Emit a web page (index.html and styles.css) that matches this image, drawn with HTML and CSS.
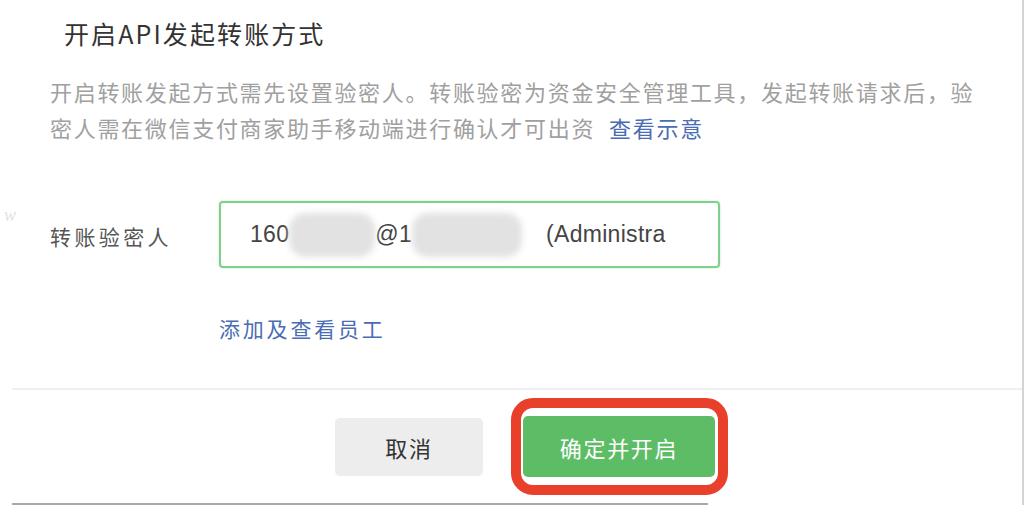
FILE: index.html
```html
<!DOCTYPE html>
<html lang="zh-CN">
<head>
<meta charset="utf-8">
<link rel="stylesheet" href="styles.css">
</head>
<body>
<div class="dialog">
  <div class="body">
    <h1 class="title">开启API发起转账方式</h1>
    <div class="desc">
      <div class="desc-line">开启转账发起方式需先设置验密人。转账验密为资金安全管理工具，发起转账请求后，验</div>
      <div class="desc-line"><span>密人需在微信支付商家助手移动端进行确认才可出资</span><a class="link desc-link">查看示意</a></div>
    </div>
    <div class="form-row">
      <span class="mark">w</span>
      <label class="label">转账验密人</label>
      <div class="input">160<span class="blob blob-a"></span>@1<span class="blob blob-b"></span>(Administra</div>
    </div>
    <div class="link-row"><a class="link">添加及查看员工</a></div>
  </div>
  <div class="divider"></div>
  <div class="footer">
    <button class="btn btn-cancel">取消</button>
    <div class="highlight">
      <button class="btn btn-ok">确定并开启</button>
    </div>
  </div>
  <div class="edge"></div>
</div>
</body>
</html>
```
FILE: styles.css
```css
html, body {
  margin: 0;
  padding: 0;
  background: #ffffff;
}
body {
  font-family: "Noto Sans CJK SC", "Liberation Sans", sans-serif;
  width: 1024px;
  height: 505px;
  overflow: hidden;
}
.dialog {
  margin-left: 12px;
  width: 1010px;
  height: 505px;
  border-right: 2px solid #d4d4d4;
  display: flex;
  flex-direction: column;
}
.body {
  padding-left: 38px;
}
.title {
  margin: 15px 0 0 14px;
  font-size: 25px;
  font-weight: normal;
  line-height: 36px;
  letter-spacing: 2.1px;
  color: #333333;
}
.desc {
  margin: 22px 0 0 0;
  width: 940px;
  font-size: 22px;
  line-height: 36px;
  letter-spacing: 1.7px;
  color: #a0a0a0;
}
.desc-line {
  white-space: nowrap;
}
.link {
  color: #4a6db3;
  cursor: pointer;
}
.desc-link {
  margin-left: 14px;
}
.form-row {
  margin-top: 56px;
  display: flex;
  align-items: center;
  position: relative;
}
.mark {
  position: absolute;
  left: -46px;
  top: 4px;
  font-family: "Liberation Serif", serif;
  font-style: italic;
  font-size: 18px;
  color: #e2e2e2;
}
.label {
  width: 169px;
  font-size: 21px;
  letter-spacing: 3.4px;
  color: #555555;
  padding-top: 3px;
}
.input {
  box-sizing: border-box;
  width: 501px;
  height: 67px;
  border: 2px solid #7fd089;
  border-radius: 4px;
  box-shadow: 0 0 2px rgba(100, 200, 110, 0.5);
  padding-left: 29px;
  display: flex;
  align-items: center;
  font-family: "Liberation Sans", "Noto Sans CJK SC", sans-serif;
  font-size: 23px;
  letter-spacing: 0.3px;
  color: #444444;
}
.blob {
  display: inline-block;
  height: 44px;
  background: #e2e2e2;
  border-radius: 16px;
  filter: blur(3px);
}
.blob-a {
  width: 86px;
}
.blob-b {
  width: 110px;
  margin-right: 24px;
}
.link-row {
  margin-top: 45px;
  padding-left: 169px;
  font-size: 21px;
  letter-spacing: 2.8px;
  line-height: 30px;
}
.divider {
  margin-top: 45px;
  height: 2px;
  background: #efefef;
}
.footer {
  display: flex;
  align-items: center;
  padding-left: 323px;
  margin-top: 8px;
}
.btn {
  border: none;
  font-family: "Noto Sans CJK SC", sans-serif;
  font-size: 22px;
  letter-spacing: 1.7px;
  cursor: pointer;
}
.btn-cancel {
  width: 148px;
  height: 58px;
  background: #ededed;
  color: #333333;
  border-radius: 5px;
}
.highlight {
  margin-left: 28px;
  border: 10px solid #e8402a;
  border-radius: 22px;
  padding: 8px 3px 8px 2px;
  display: flex;
}
.btn-ok {
  width: 192px;
  height: 61px;
  background: #5dbd66;
  color: #ffffff;
  border-radius: 5px;
}
.edge {
  margin-top: 8px;
  width: 696px;
  height: 2px;
  background: #a9a9a9;
}
```
